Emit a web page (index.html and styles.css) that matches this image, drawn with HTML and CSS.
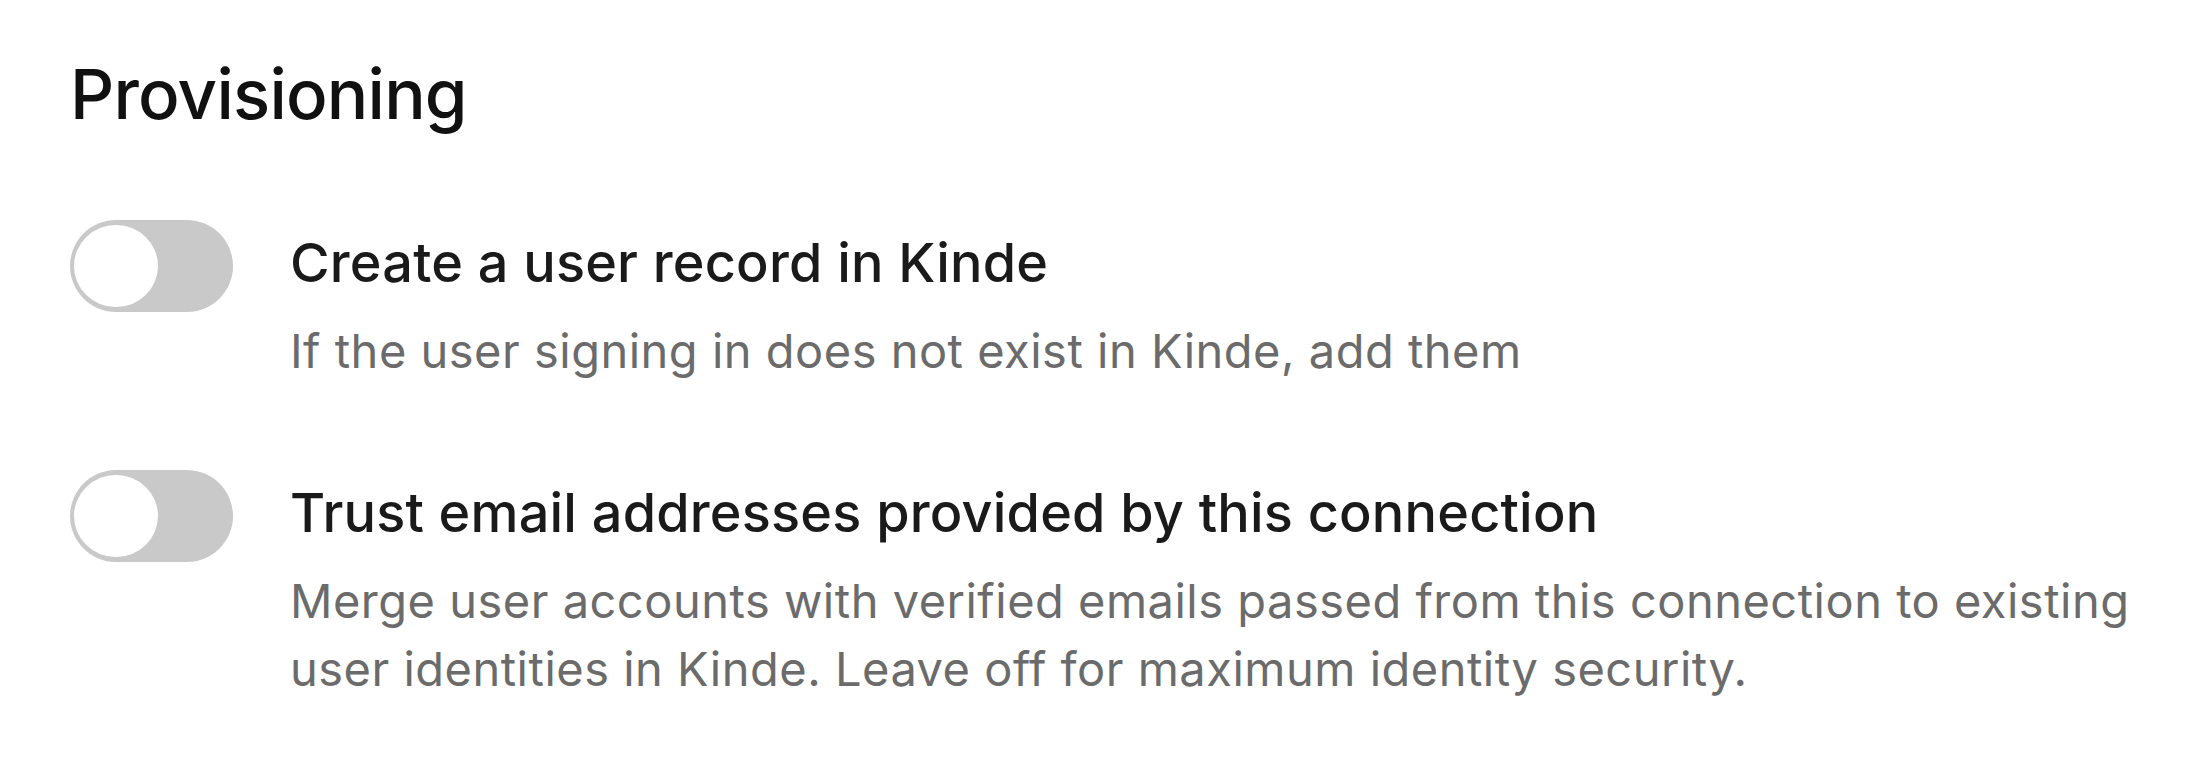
FILE: index.html
```html
<!DOCTYPE html>
<html lang="en">
<head>
<meta charset="utf-8">
<title>Provisioning</title>
<link rel="stylesheet" href="styles.css">
</head>
<body>
<section class="panel">
  <h2 class="heading">Provisioning</h2>
  <div class="settings">
    <div class="setting">
      <span class="toggle" role="switch" aria-checked="false"><span class="knob"></span></span>
      <div class="setting-text">
        <div class="setting-title">Create a user record in Kinde</div>
        <div class="setting-desc">If the user signing in does not exist in Kinde, add them</div>
      </div>
    </div>
    <div class="setting">
      <span class="toggle" role="switch" aria-checked="false"><span class="knob"></span></span>
      <div class="setting-text">
        <div class="setting-title">Trust email addresses provided by this connection</div>
        <div class="setting-desc">Merge user accounts with verified emails passed from this connection to existing user identities in Kinde. Leave off for maximum identity security.</div>
      </div>
    </div>
  </div>
</section>
</body>
</html>
```
FILE: styles.css
```css
html, body {
  margin: 0;
  padding: 0;
  background: #ffffff;
}
body {
  font-family: Inter, "Noto Sans", "Liberation Sans", sans-serif;
  width: 2200px;
  height: 766px;
  overflow: hidden;
}
.panel {
  padding: 53px 60px 0 70px;
}
.heading {
  margin: 0;
  font-size: 69px;
  line-height: 83px;
  font-weight: 500;
  color: #111111;
  letter-spacing: -0.8px;
}
.settings {
  display: flex;
  flex-direction: column;
  gap: 85px;
  margin-top: 84px;
}
.setting {
  display: flex;
  align-items: flex-start;
  gap: 57px;
}
.toggle {
  flex: none;
  width: 163px;
  height: 92px;
  border-radius: 46px;
  background: #c9c9c9;
  display: flex;
  align-items: center;
  padding-left: 4px;
  box-sizing: border-box;
}
.knob {
  width: 84px;
  height: 82px;
  border-radius: 50%;
  background: #ffffff;
}
.setting-text {
  padding-top: 8px;
  min-width: 0;
}
.setting-title {
  font-size: 54px;
  line-height: 70px;
  font-weight: 500;
  color: #1a1a1a;
  letter-spacing: 0.2px;
}
.setting-desc {
  margin-top: 19px;
  font-size: 47px;
  line-height: 68px;
  font-weight: 400;
  color: #6b6b6b;
  letter-spacing: 0.5px;
}
```
